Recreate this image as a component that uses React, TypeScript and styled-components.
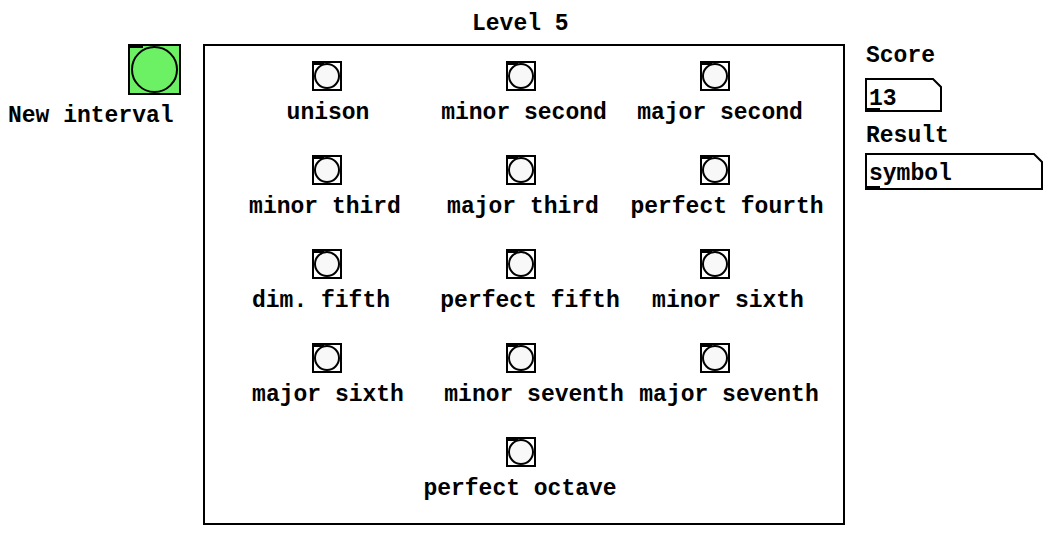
import React from "react";
import styled, { createGlobalStyle } from "styled-components";

const GlobalStyle = createGlobalStyle`
  html, body {
    margin: 0;
    padding: 0;
    background: #ffffff;
  }
  body {
    font-family: "Liberation Mono", "Courier New", monospace;
    font-weight: bold;
    font-size: 23px;
    color: #000000;
  }
`;

const Page = styled.div`
  display: flex;
  align-items: flex-start;
  width: 1056px;
  height: 537px;
  overflow: hidden;
`;

const Text = styled.div`
  font-family: "Liberation Mono", "Courier New", monospace;
  font-weight: bold;
  font-size: 23px;
  line-height: 26px;
  white-space: nowrap;
`;

/* left: the big green bang */
const LeftColumn = styled.div`
  display: flex;
  flex-direction: column;
  align-items: flex-start;
  width: 195px;
  padding: 44px 0 0 8px;
`;

const BigBang = styled.div`
  position: relative;
  box-sizing: border-box;
  width: 53px;
  height: 51px;
  margin-left: 120px;
  border: 2px solid #000;
  background: #6cf064;
  display: flex;
  align-items: center;
  justify-content: center;

  &::before {
    content: "";
    position: absolute;
    top: -2px;
    left: -2px;
    width: 15px;
    height: 4px;
    background: #000;
  }
`;

const Circle = styled.div<{ $size: number; $fill: string }>`
  box-sizing: border-box;
  width: ${(p) => p.$size}px;
  height: ${(p) => p.$size}px;
  border: 2px solid #000;
  border-radius: 50%;
  background: ${(p) => p.$fill};
`;

const NewLabel = styled(Text)`
  margin-top: 8px;
`;

/* center: level frame with the interval bangs */
const CenterColumn = styled.div`
  display: flex;
  flex-direction: column;
  width: 642px;
  padding-top: 11px;
`;

const Title = styled(Text)`
  padding-left: 269px;
  margin-bottom: 7px;
`;

const Frame = styled.div`
  box-sizing: border-box;
  width: 642px;
  height: 481px;
  border: 2px solid #000;
  padding: 15px 0 0 25px;
  display: grid;
  grid-template-columns: repeat(3, 194px);
  grid-auto-rows: 94px;
`;

const Cell = styled.div<{ $col?: number }>`
  display: flex;
  flex-direction: column;
  align-items: center;
  grid-column: ${(p) => (p.$col ? p.$col : "auto")};
`;

const Bang = styled.div`
  position: relative;
  box-sizing: border-box;
  width: 30px;
  height: 30px;
  border: 2px solid #000;
  background: #fff;
  display: flex;
  align-items: center;
  justify-content: center;

  &::before {
    content: "";
    position: absolute;
    top: -2px;
    left: -2px;
    width: 12px;
    height: 4px;
    background: #000;
  }
`;

const IntervalLabel = styled(Text)<{ $dx: number }>`
  margin-top: 9px;
  margin-left: ${(p) => p.$dx * 2}px;
`;

/* right: score and result atoms */
const RightColumn = styled.div`
  display: flex;
  flex-direction: column;
  align-items: flex-start;
  padding: 43px 0 0 20px;
`;

const SideLabel = styled(Text)<{ $mt: number }>`
  margin-top: ${(p) => p.$mt}px;
  padding-left: 1px;
`;

const AtomWrap = styled.div<{ $w: number; $h: number; $mt: number }>`
  position: relative;
  box-sizing: border-box;
  width: ${(p) => p.$w}px;
  height: ${(p) => p.$h}px;
  margin-top: ${(p) => p.$mt}px;
  padding: 8px 0 0 4px;

  svg {
    position: absolute;
    left: 0;
    top: 0;
  }
`;

const AtomText = styled(Text)`
  position: relative;
`;

function Atom({ w, h, mt, value }: { w: number; h: number; mt: number; value: string }) {
  const path = `M1 1 H${w - 9} L${w - 1} 9 V${h - 1} H1 Z`;
  return (
    <AtomWrap $w={w} $h={h} $mt={mt}>
      <svg width={w} height={h} viewBox={`0 0 ${w} ${h}`}>
        <path d={path} fill="#fff" stroke="#000" strokeWidth={2} />
        <rect x={0} y={h - 4} width={15} height={4} fill="#000" />
      </svg>
      <AtomText>{value}</AtomText>
    </AtomWrap>
  );
}

const intervals: { name: string; dx: number; col?: number }[] = [
  { name: "unison", dx: 1 },
  { name: "minor second", dx: 3 },
  { name: "major second", dx: 5 },
  { name: "minor third", dx: -2 },
  { name: "major third", dx: 2 },
  { name: "perfect fourth", dx: 12 },
  { name: "dim. fifth", dx: -6 },
  { name: "perfect fifth", dx: 9 },
  { name: "minor sixth", dx: 13 },
  { name: "major sixth", dx: 1 },
  { name: "minor seventh", dx: 13 },
  { name: "major seventh", dx: 14 },
  { name: "perfect octave", dx: -1, col: 2 },
];

export default function App() {
  return (
    <>
      <GlobalStyle />
      <Page>
        <LeftColumn>
          <BigBang>
            <Circle $size={47} $fill="#6cf064" />
          </BigBang>
          <NewLabel>New interval</NewLabel>
        </LeftColumn>

        <CenterColumn>
          <Title>Level 5</Title>
          <Frame>
            {intervals.map((iv) => (
              <Cell key={iv.name} $col={iv.col}>
                <Bang>
                  <Circle $size={26} $fill="#f8f8f8" />
                </Bang>
                <IntervalLabel $dx={iv.dx}>{iv.name}</IntervalLabel>
              </Cell>
            ))}
          </Frame>
        </CenterColumn>

        <RightColumn>
          <SideLabel $mt={0}>Score</SideLabel>
          <Atom w={77} h={34} mt={9} value="13" />
          <SideLabel $mt={11}>Result</SideLabel>
          <Atom w={178} h={37} mt={4} value="symbol" />
        </RightColumn>
      </Page>
    </>
  );
}
